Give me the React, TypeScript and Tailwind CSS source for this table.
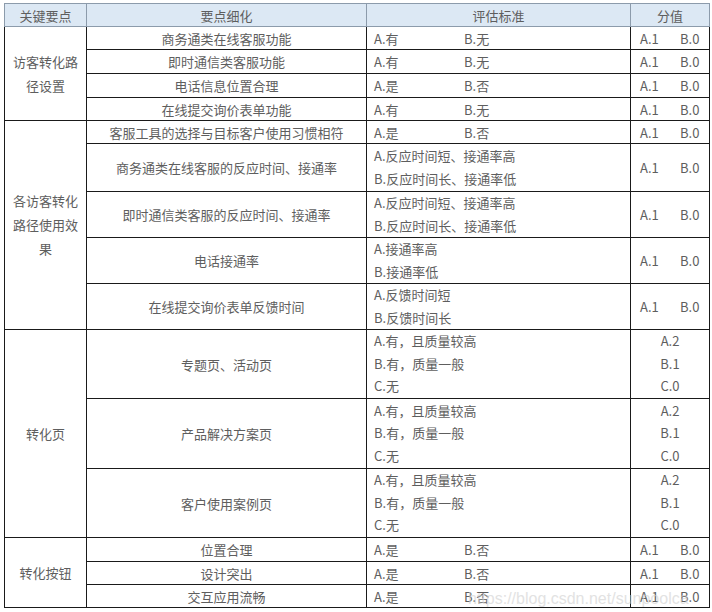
import React from 'react';

type Row = {
  item: string;
  criteria: string[][]; // each line: [left, right?]
  score: 'ab' | 'abc';
  h: string;
};

type Group = {
  title: string[];
  rows: Row[];
};

const yesNo = [['A.有', 'B.无']];
const shiFou = [['A.是', 'B.否']];
const quality = [['A.有，且质量较高'], ['B.有，质量一般'], ['C.无']];

const groups: Group[] = [
  {
    title: ['访客转化路', '径设置'],
    rows: [
      { item: '商务通类在线客服功能', criteria: yesNo, score: 'ab', h: 'h-[23px]' },
      { item: '即时通信类客服功能', criteria: yesNo, score: 'ab', h: 'h-[24px]' },
      { item: '电话信息位置合理', criteria: shiFou, score: 'ab', h: 'h-[24px]' },
      { item: '在线提交询价表单功能', criteria: yesNo, score: 'ab', h: 'h-[23px]' },
    ],
  },
  {
    title: ['各访客转化', '路径使用效', '果'],
    rows: [
      { item: '客服工具的选择与目标客户使用习惯相符', criteria: shiFou, score: 'ab', h: 'h-[23px]' },
      {
        item: '商务通类在线客服的反应时间、接通率',
        criteria: [['A.反应时间短、接通率高'], ['B.反应时间长、接通率低']],
        score: 'ab',
        h: 'h-[48px]',
      },
      {
        item: '即时通信类客服的反应时间、接通率',
        criteria: [['A.反应时间短、接通率高'], ['B.反应时间长、接通率低']],
        score: 'ab',
        h: 'h-[46px]',
      },
      { item: '电话接通率', criteria: [['A.接通率高'], ['B.接通率低']], score: 'ab', h: 'h-[46px]' },
      { item: '在线提交询价表单反馈时间', criteria: [['A.反馈时间短'], ['B.反馈时间长']], score: 'ab', h: 'h-[46px]' },
    ],
  },
  {
    title: ['转化页'],
    rows: [
      { item: '专题页、活动页', criteria: quality, score: 'abc', h: 'h-[69px]' },
      { item: '产品解决方案页', criteria: quality, score: 'abc', h: 'h-[70px]' },
      { item: '客户使用案例页', criteria: quality, score: 'abc', h: 'h-[69px]' },
    ],
  },
  {
    title: ['转化按钮'],
    rows: [
      { item: '位置合理', criteria: shiFou, score: 'ab', h: 'h-[24px]' },
      { item: '设计突出', criteria: shiFou, score: 'ab', h: 'h-[23px]' },
      { item: '交互应用流畅', criteria: shiFou, score: 'ab', h: 'h-[23px]' },
    ],
  },
];

const cell = 'border border-[#1a1a1a] p-0 align-middle leading-[21px]';

function Criteria({ lines }: { lines: string[][] }) {
  const lh = lines.length > 1 ? 'leading-[22.5px]' : 'leading-[21px]';
  return (
    <div className={`pl-[7px] ${lh}`}>
      {lines.map((l, i) => (
        <div key={i} className="flex whitespace-nowrap">
          <span className={l[1] ? 'w-[90px]' : ''}>{l[0]}</span>
          {l[1] && <span>{l[1]}</span>}
        </div>
      ))}
    </div>
  );
}

function Score({ kind }: { kind: 'ab' | 'abc' }) {
  if (kind === 'abc') {
    return (
      <div className="text-center leading-[22.5px]">
        <div>A.2</div>
        <div>B.1</div>
        <div>C.0</div>
      </div>
    );
  }
  return (
    <div className="flex pl-[9px] leading-[21px] whitespace-nowrap">
      <span className="w-[40px]">A.1</span>
      <span>B.0</span>
    </div>
  );
}

export default function App() {
  return (
    <div
      className="relative h-[612px] w-[712px] overflow-hidden bg-white pl-[4px] pt-[3px] text-[13px] text-[#5e5e5e]"
      style={{ fontFamily: '"Microsoft YaHei", "Noto Sans CJK SC", "Noto Sans", sans-serif' }}
    >
      <table className="w-[705px] table-fixed border-collapse">
        <colgroup>
          <col className="w-[82px]" />
          <col className="w-[280px]" />
          <col className="w-[264px]" />
          <col className="w-[79px]" />
        </colgroup>
        <thead>
          <tr className="h-[23px] bg-[#dce8f4] leading-[21px]">
            <th className="border border-[#8c9bab] p-0 text-center font-normal">关键要点</th>
            <th className="border border-[#8c9bab] p-0 text-center font-normal">要点细化</th>
            <th className="border border-[#8c9bab] p-0 text-center font-normal">评估标准</th>
            <th className="border border-[#8c9bab] p-0 text-center font-normal">分值</th>
          </tr>
        </thead>
        <tbody>
          {groups.map((g) =>
            g.rows.map((r, i) => (
              <tr key={g.title.join('') + i} className={r.h}>
                {i === 0 && (
                  <td rowSpan={g.rows.length} className={`${cell} text-center !leading-[24px]`}>
                    {g.title.map((t) => (
                      <div key={t}>{t}</div>
                    ))}
                  </td>
                )}
                <td className={`${cell} text-center`}>{r.item}</td>
                <td className={cell}>
                  <Criteria lines={r.criteria} />
                </td>
                <td className={cell}>
                  <Score kind={r.score} />
                </td>
              </tr>
            )),
          )}
        </tbody>
      </table>
      <div
        className="pointer-events-none absolute left-[468px] top-[587px] text-[16px] whitespace-nowrap text-[#d0d0d0] opacity-60"
        style={{ fontFamily: '"Liberation Sans", Arial, sans-serif' }}
      >
        https://blog.csdn.net/sunpoolca
      </div>
    </div>
  );
}
